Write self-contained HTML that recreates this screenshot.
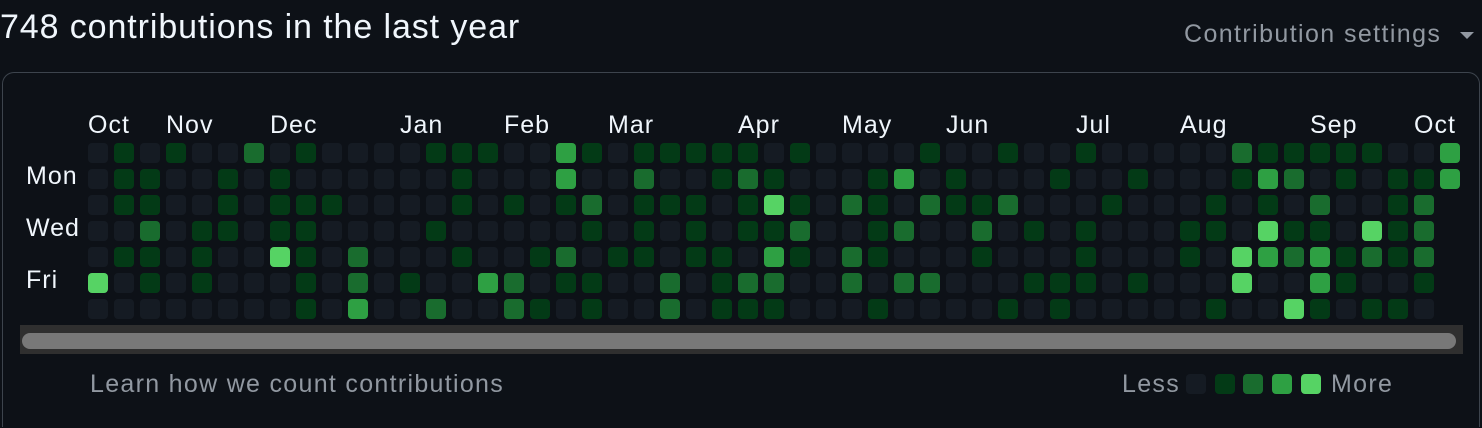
<!DOCTYPE html>
<html><head><meta charset="utf-8"><style>
html,body{margin:0;padding:0;background:#0d1117;width:1482px;height:428px;overflow:hidden;font-family:"Liberation Sans",Arial,sans-serif;position:relative}
.t{position:absolute;white-space:nowrap}
h1{position:absolute;left:0;top:8px;margin:0;font-weight:400;font-size:34px;color:#f0f6fc;letter-spacing:0.9px;white-space:nowrap}
.box{position:absolute;left:2px;top:72px;width:1476px;height:354px;border:1.5px solid #3d444d;border-bottom:none;border-radius:12px 12px 0 0}
.m{position:absolute;top:111px;font-size:25px;color:#f0f6fc;letter-spacing:1px}
.d{position:absolute;left:26px;font-size:25px;color:#f0f6fc;letter-spacing:1px}
.c{position:absolute;width:20px;height:20px;border-radius:4px}
.g{font-size:25px;color:#9198a1;letter-spacing:1.3px}
.l0{background:#151b23}.l1{background:#033a16}.l2{background:#196c2e}.l3{background:#2ea043}.l4{background:#56d364}
</style></head><body>
<h1>748 contributions in the last year</h1>
<div class="t g" style="left:1184px;top:20px;letter-spacing:1.4px">Contribution settings</div>
<svg style="position:absolute;left:1459px;top:31px" width="16" height="10"><path d="M1 1 L15 1 L8 8 Z" fill="#9198a1"/></svg>
<div class="box"></div>
<div class="m" style="left:88px">Oct</div><div class="m" style="left:166px">Nov</div><div class="m" style="left:270px">Dec</div><div class="m" style="left:400px">Jan</div><div class="m" style="left:504px">Feb</div><div class="m" style="left:608px">Mar</div><div class="m" style="left:738px">Apr</div><div class="m" style="left:842px">May</div><div class="m" style="left:946px">Jun</div><div class="m" style="left:1076px">Jul</div><div class="m" style="left:1180px">Aug</div><div class="m" style="left:1310px">Sep</div><div class="m" style="left:1414px">Oct</div>
<div class="d" style="top:162px">Mon</div><div class="d" style="top:214px">Wed</div><div class="d" style="top:266px">Fri</div>
<div id="g"></div>
<div style="position:absolute;left:20px;top:325px;width:1443px;height:29px;background:#2f2f2f"></div>
<div style="position:absolute;left:22px;top:333px;width:1434px;height:16px;background:#787878;border-radius:8px"></div>
<div class="t g" style="left:90px;top:370px">Learn how we count contributions</div>
<div class="t g" style="left:1122px;top:370px">Less</div>
<div class="c l0" style="left:1186px;top:374px"></div><div class="c l1" style="left:1215px;top:374px"></div><div class="c l2" style="left:1243px;top:374px"></div><div class="c l3" style="left:1272px;top:374px"></div><div class="c l4" style="left:1301px;top:374px"></div>
<div class="t g" style="left:1331px;top:370px">More</div>
<script>
var R=[
"010100201000011100"+"31011111010000100"+"100100000211111003",
"011001010000001000"+"30020012100013010"+"001001000132010113",
"011001011100001010"+"12011101410210211"+"20001000101020012",
"002011011000010000"+"01010101120012002"+"01010001104110412",
"011010041020001001"+"20110110310210001"+"00010001043231212",
"401010001020100320"+"11002012200202200"+"01110100040031001",
"000000001030020021"+"01002011100010000"+"10100000100410110"
];
var h="";
for(var r=0;r<7;r++){var s=R[r];for(var c=0;c<s.length&&c<53;c++){h+='<div class="c l'+s[c]+'" style="left:'+(88+26*c)+'px;top:'+(143+26*r)+'px"></div>';}}
document.getElementById("g").innerHTML=h;
</script>
</body></html>
